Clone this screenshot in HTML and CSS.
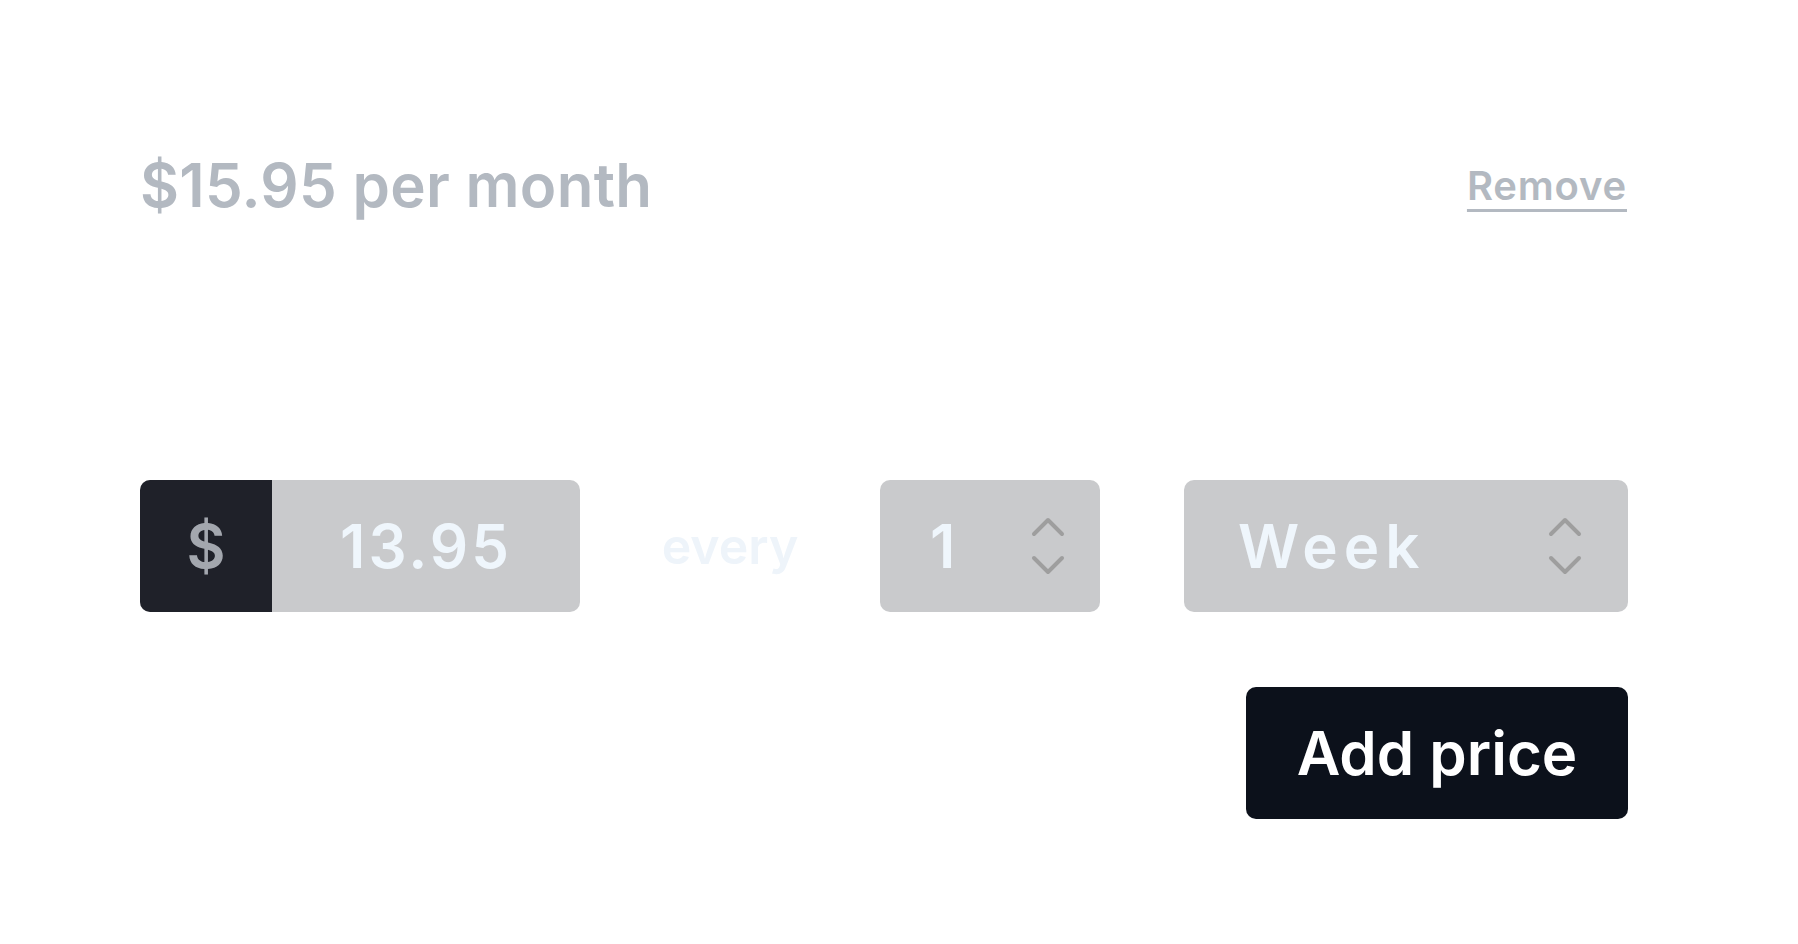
FILE: index.html
```html
<!DOCTYPE html>
<html lang="en">
<head>
  <meta charset="UTF-8">
  <meta name="viewport" content="width=device-width, initial-scale=1.0">
  <title>Edit Price</title>
  <link rel="stylesheet" href="styles.css">
</head>
<body>
  <div class="content">
    <div class="price-header">
      <h1 class="price-title">$15.95 per month</h1>
      <a href="#" class="remove">Remove</a>
    </div>

    <form class="price-form" onsubmit="return false">
      <div class="amount">
        <span class="currency">$</span>
        <span class="amount-value">13.95</span>
      </div>
      <span class="every">every</span>
      <div class="select count">
        <span class="select-value">1</span>
        <svg class="chevrons" width="36" height="66" viewBox="0 0 36 66">
          <polyline points="4,21 18,7 32,21" />
          <polyline points="4,45 18,59 32,45" />
        </svg>
      </div>
      <div class="select period">
        <span class="select-value wide">Week</span>
        <svg class="chevrons" width="36" height="66" viewBox="0 0 36 66">
          <polyline points="4,21 18,7 32,21" />
          <polyline points="4,45 18,59 32,45" />
        </svg>
      </div>
    </form>

    <div class="actions">
      <button type="button" class="add">Add price</button>
    </div>
  </div>
</body>
</html>
```

FILE: styles.css
```css
/* Base Styles */
body {
  margin: 0;
  padding: 0;
  background: #ffffff;
  font-family: Inter, "Noto Sans", sans-serif;
}

.content {
  width: 1488px;
  padding: 149px 0 0 140px;
}

/* Header */
.price-header {
  display: flex;
  justify-content: space-between;
  align-items: center;
}

.price-title {
  margin: 0;
  font-size: 60px;
  line-height: 72px;
  font-weight: 600;
  letter-spacing: 0.3px;
  color: #b3b9c1;
}

.remove {
  font-size: 40px;
  font-weight: 600;
  letter-spacing: 0.02em;
  margin-right: 1px;
  color: #b3b9c1;
  text-decoration: underline;
  text-decoration-thickness: 3px;
  text-underline-offset: 9px;
}

/* Form row */
.price-form {
  display: flex;
  align-items: center;
  margin-top: 259px;
  font-size: 60px;
  font-weight: 600;
}

.amount {
  display: flex;
  width: 440px;
  height: 132px;
  border-radius: 10px;
  overflow: hidden;
  background: #c9cacc;
}

.currency {
  width: 132px;
  display: flex;
  align-items: center;
  justify-content: center;
  background: #1f2129;
  color: #a3a7ae;
}

.amount-value {
  flex: 1;
  display: flex;
  align-items: center;
  justify-content: center;
  letter-spacing: 0.05em;
  color: #eff6fc;
}

.every {
  width: 300px;
  text-align: center;
  font-size: 50px;
  color: #eef4fa;
}

.select {
  display: flex;
  align-items: center;
  height: 132px;
  border-radius: 10px;
  background: #c9cacc;
  box-sizing: border-box;
}

.select-value {
  color: #eff6fc;
}

.select-value.wide {
  letter-spacing: 0.1em;
}

.count {
  width: 220px;
  padding: 0 34px 0 50px;
  margin-right: 84px;
}

.period {
  flex: 1;
  padding: 0 45px 0 54px;
}

.chevrons {
  margin-left: auto;
  fill: none;
  stroke: #9e9e9e;
  stroke-width: 4;
  stroke-linecap: round;
  stroke-linejoin: round;
}

/* Button */
.actions {
  display: flex;
  justify-content: flex-end;
  margin-top: 75px;
}

.add {
  width: 382px;
  height: 132px;
  border: none;
  border-radius: 10px;
  background: #0c111b;
  color: #ffffff;
  font-family: Inter, "Noto Sans", sans-serif;
  font-size: 60px;
  font-weight: 600;
  cursor: pointer;
}
```
